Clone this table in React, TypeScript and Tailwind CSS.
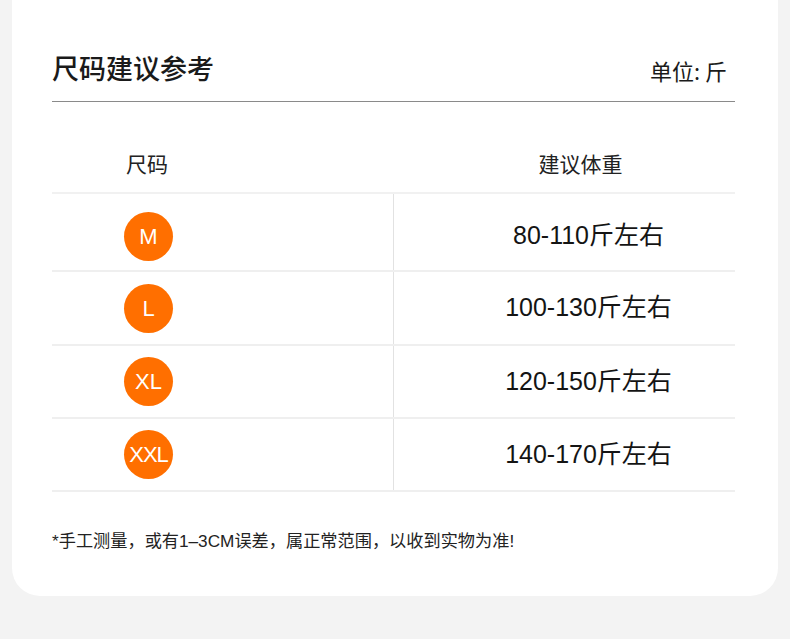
const rows = [
  { size: 'M', weight: '80-110斤左右', h: 'h-[76px] pt-[8px]' },
  { size: 'L', weight: '100-130斤左右', h: 'h-[72px]' },
  { size: 'XL', weight: '120-150斤左右', h: 'h-[71px]' },
  { size: 'XXL', weight: '140-170斤左右', h: 'h-[71px]' },
];

const latinFirst = { fontFamily: '"Liberation Sans", "Noto Sans CJK SC", sans-serif' };

export default function App() {
  return (
    <div
      className="min-h-[639px] w-[790px] bg-[#f3f3f3]"
      style={{ fontFamily: '"Noto Sans CJK SC", "Noto Sans", sans-serif' }}
    >
      <div className="mx-3 rounded-b-[28px] bg-white pl-10 pr-[43px] pt-[50px] pb-[43px]">
        {/* Heading */}
        <div className="flex items-end justify-between border-b border-[#8a8a8a] pb-[15px] pr-2">
          <h2 className="text-[27px] leading-[36px] font-medium text-[#1a1a1a]">尺码建议参考</h2>
          <span className="mb-[1px] text-[22px] leading-[30px] text-[#1a1a1a]">单位: 斤</span>
        </div>

        {/* Table */}
        <div className="mt-[40px]">
          <div className="flex h-[52px] items-start border-b-2 border-[#f1f1f1] pt-[6px] text-[21px] leading-[30px] text-[#222]">
            <div className="w-[342px] pl-[74px]">尺码</div>
            <div className="flex-1 pl-[32px] text-center">建议体重</div>
          </div>
          {rows.map((r) => (
            <div key={r.size} className="flex border-b-2 border-[#efefef]">
              <div className={`flex w-[342px] items-center border-r border-[#e2e2e2] ${r.h}`}>
                <div
                  className={`ml-[72px] flex h-[49px] w-[49px] items-center justify-center rounded-full bg-[#ff6f00] text-[22px] text-white ${r.size === 'XXL' ? 'tracking-[-1px]' : ''}`}
                  style={{ fontFamily: '"Liberation Sans", Arial, sans-serif' }}
                >
                  {r.size}
                </div>
              </div>
              <div
                className={`flex flex-1 items-center justify-center pl-[48px] text-[25px] text-[#141414] ${r.h}`}
                style={latinFirst}
              >
                {r.weight}
              </div>
            </div>
          ))}
        </div>

        {/* Note */}
        <p className="mt-[37px] text-[17.2px] leading-[24px] text-[#222]" style={latinFirst}>
          *手工测量，或有1–3CM误差，属正常范围，以收到实物为准!
        </p>
      </div>
    </div>
  );
}
